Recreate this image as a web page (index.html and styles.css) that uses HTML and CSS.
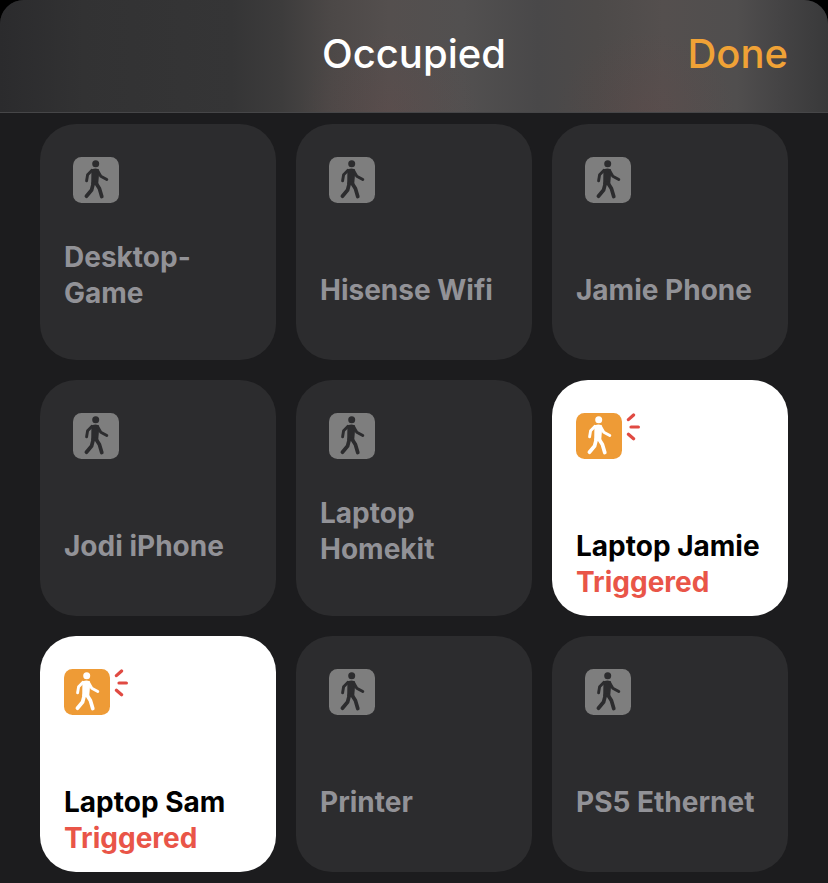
FILE: index.html
```html
<!DOCTYPE html>
<html lang="en">
<head>
<meta charset="utf-8">
<meta name="viewport" content="width=device-width, initial-scale=1">
<title>Occupied</title>
<link rel="stylesheet" href="styles.css">
</head>
<body>
<svg class="sprite" aria-hidden="true">
  <symbol id="walker" viewBox="0 0 46 46">
    <rect class="badge" width="46" height="46" rx="8.5"/>
    <g class="figure">
      <circle cx="22.7" cy="6.8" r="3.5"/>
      <path d="M17.6 13Q21.5 10.2 26 12.4L26.2 15.5L25.2 27L18.2 27L18.4 15Z"/>
      <path class="limb" d="M18.8 13.4L14.6 17.8L13.6 23.8M24.6 13.6L27.8 19.2L33.8 22.6"/>
      <path class="leg" d="M22.9 26L26.4 31.5L28.8 39.6M20.4 26L18.6 33L13.4 39.2"/>
    </g>
  </symbol>
  <symbol id="rays" viewBox="0 0 14 28">
    <path class="ray" d="M2.4 6.6L7.6 2M5 14H12.4M2.4 21.2L7.6 25.8"/>
  </symbol>
</svg>
<div class="sheet">
  <header class="bar">
    <h1 class="title">Occupied</h1>
    <button class="done" type="button">Done</button>
  </header>
  <main class="grid">
    <button class="tile" type="button">
      <span class="icon"><svg class="walker"><use href="#walker"/></svg></span>
      <span class="label"><span class="name">Desktop-Game</span></span>
    </button>
    <button class="tile" type="button">
      <span class="icon"><svg class="walker"><use href="#walker"/></svg></span>
      <span class="label"><span class="name">Hisense Wifi</span></span>
    </button>
    <button class="tile" type="button">
      <span class="icon"><svg class="walker"><use href="#walker"/></svg></span>
      <span class="label"><span class="name">Jamie Phone</span></span>
    </button>
    <button class="tile" type="button">
      <span class="icon"><svg class="walker"><use href="#walker"/></svg></span>
      <span class="label"><span class="name">Jodi iPhone</span></span>
    </button>
    <button class="tile" type="button">
      <span class="icon"><svg class="walker"><use href="#walker"/></svg></span>
      <span class="label"><span class="name">Laptop Homekit</span></span>
    </button>
    <button class="tile tile-on" type="button">
      <span class="icon"><svg class="walker"><use href="#walker"/></svg><svg class="rays"><use href="#rays"/></svg></span>
      <span class="label"><span class="name">Laptop Jamie</span><span class="status">Triggered</span></span>
    </button>
    <button class="tile tile-on" type="button">
      <span class="icon"><svg class="walker"><use href="#walker"/></svg><svg class="rays"><use href="#rays"/></svg></span>
      <span class="label"><span class="name">Laptop Sam</span><span class="status">Triggered</span></span>
    </button>
    <button class="tile" type="button">
      <span class="icon"><svg class="walker"><use href="#walker"/></svg></span>
      <span class="label"><span class="name">Printer</span></span>
    </button>
    <button class="tile" type="button">
      <span class="icon"><svg class="walker"><use href="#walker"/></svg></span>
      <span class="label"><span class="name">PS5 Ethernet</span></span>
    </button>
  </main>
</div>
</body>
</html>
```
FILE: styles.css
```css
* {
  box-sizing: border-box;
}

body {
  margin: 0;
  background: #000;
  font-family: Inter, "Liberation Sans", sans-serif;
}

button {
  margin: 0;
  border: 0;
  font: inherit;
  cursor: pointer;
}

.sprite {
  position: absolute;
  width: 0;
  height: 0;
}

.sheet {
  min-height: 100vh;
  overflow: hidden;
  border-radius: 24px 24px 0 0;
  background: #1c1c1e;
}

.bar {
  display: grid;
  grid-template-columns: 1fr auto 1fr;
  align-items: center;
  padding: 29px 40px 33px;
  border-bottom: 1px solid #464648;
  background:
    radial-gradient(ellipse 90px 80px at 47% 100%, rgba(110, 70, 70, 0.2), transparent),
    radial-gradient(ellipse 90px 80px at 78% 100%, rgba(110, 70, 70, 0.2), transparent),
    linear-gradient(90deg, #2b2b2d 0%, #323233 10%, #353536 28%, #3d3c3c 34%, #4c4847 40%, #544f4e 47%, #525050 56%, #494849 65%, #4d4a49 72%, #544f4e 80%, #504e4e 89%, #454445 94%, #39393a 100%);
}

.title,
.done {
  font-size: 40px;
  font-weight: 500;
  line-height: 50px;
}

.title {
  grid-column: 2;
  margin: 0;
  color: #fff;
}

.done {
  justify-self: end;
  padding: 0;
  background: none;
  color: #f0a236;
}

.grid {
  display: grid;
  grid-template-columns: repeat(3, minmax(0, 1fr));
  gap: 20px;
  padding: 11px 40px;
}

.tile {
  display: flex;
  flex-direction: column;
  align-items: flex-start;
  justify-content: space-between;
  min-height: 236px;
  padding: 33px 24px 49px;
  border-radius: 36px;
  background: #2c2c2e;
  color: #929297;
  font-size: 28px;
  font-weight: 650;
  line-height: 36px;
  text-align: left;
}

.tile-on {
  --badge: #ee9b36;
  --figure: #fff;
  padding-bottom: 16px;
  background: #fff;
  color: #000;
}

.icon {
  display: flex;
  align-items: flex-start;
  justify-content: center;
  gap: 4px;
  width: 64px;
}

.walker {
  width: 46px;
  height: 46px;
}

.rays {
  width: 14px;
  height: 28px;
}

.label {
  min-height: 39px;
}

.name,
.status {
  display: block;
}

.status {
  color: #e95548;
}

.badge {
  fill: var(--badge, #7e7e7e);
}

.figure {
  fill: var(--figure, #2c2c2e);
}

.limb,
.leg,
.ray {
  fill: none;
  stroke-linecap: round;
  stroke-linejoin: round;
}

.limb {
  stroke: var(--figure, #2c2c2e);
  stroke-width: 2.9;
}

.leg {
  stroke: var(--figure, #2c2c2e);
  stroke-width: 3.7;
}

.ray {
  stroke: #e04a42;
  stroke-width: 3.2;
}
```
